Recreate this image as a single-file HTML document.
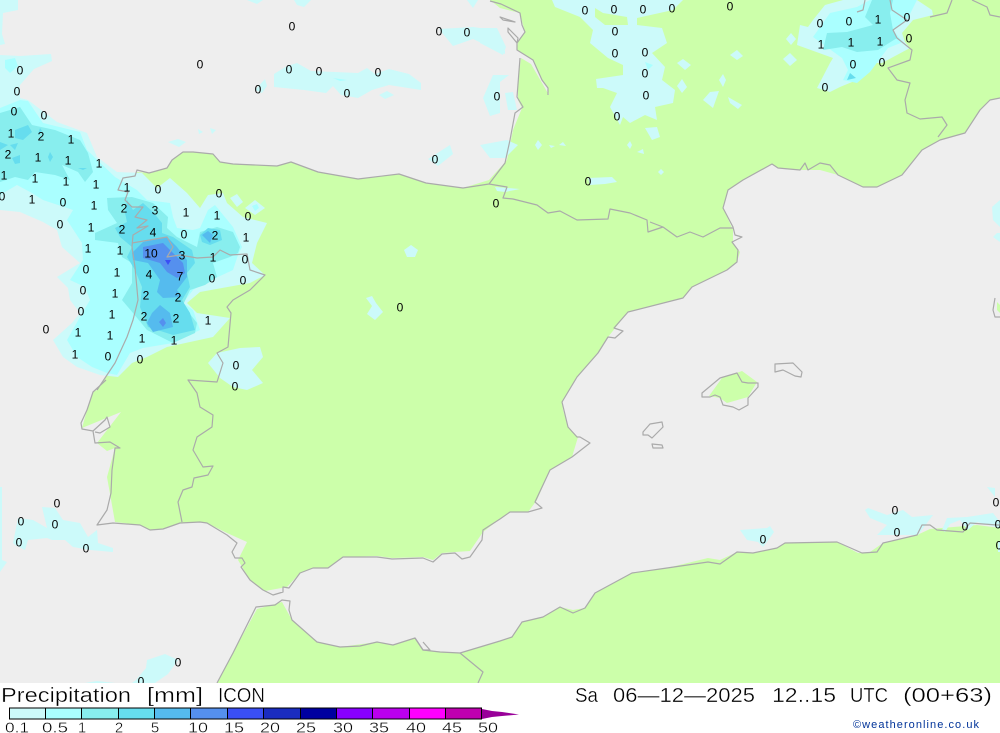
<!DOCTYPE html>
<html><head><meta charset="utf-8"><title>Precipitation</title>
<style>
html,body{margin:0;padding:0;background:#fff;width:1000px;height:733px;overflow:hidden}
svg{position:absolute;left:0;top:0;display:block}
.l text{font:12px "Liberation Sans",sans-serif;fill:#000;text-anchor:middle;dominant-baseline:central}
.c{fill:none;stroke:#aaa;stroke-width:1.2;stroke-linejoin:round}
.a{fill:#ccfafa}.b{fill:#aaffff}.d{fill:#88eeee}.e{fill:#66ddee}.f{fill:#55bbee}.g{fill:#5590ee}.h{fill:#3a4ff5}
.t text{font-family:"Liberation Sans",sans-serif;fill:#000;stroke:#fff;stroke-width:.35;paint-order:fill}
</style></head><body>
<svg width="1000" height="733" viewBox="0 0 1000 733" xmlns="http://www.w3.org/2000/svg">
<rect width="1000" height="683" fill="#eeeeee"/>
<!-- land -->
<g fill="#ccffaa">
<path d="M490,0 500,8 520,13 523,25 525,32 518,42 517,50 533,60 541,78 548,88 549,95 531,64 521,58 518,80 518,100 522,108 513,130 507,160 489,180 463,188 426,183 399,174 358,179 318,172 291,162 277,166 233,164 220,162 213,154 193,152 183,152 172,160 167,168 149,173 137,172 135,176 123,179 118,193 128,195 125,203 133,235 132,247 135,267 138,300 133,320 127,337 115,363 97,390 93,392 87,410 82,428 121,412 97,443 107,451 115,448 107,477 115,522 140,525 150,530 163,529 180,523 200,522 207,523 227,533 247,542 238,560 250,580 265,591 287,587 300,573 313,568 328,568 343,557 377,556 392,558 423,557 433,560 442,553 455,552 470,551 483,532 500,519 510,512 528,512 537,500 550,470 572,457 578,437 568,427 563,410 562,402 577,377 598,353 608,337 628,312 683,298 692,287 727,270 737,262 740,252 733,243 733,230 723,208 728,190 743,180 772,164 778,168 800,170 820,170 838,175 863,187 877,187 902,175 922,150 940,140 965,133 980,110 990,100 1000,98 1000,0Z"/>
<path d="M217,683 233,653 257,609 282,602 292,620 317,642 340,647 377,642 393,645 415,638 423,650 460,653 500,641 512,637 522,622 543,617 560,607 573,610 585,608 595,593 632,573 667,568 708,558 720,560 737,552 753,553 777,548 785,543 837,542 858,553 870,552 883,543 917,535 930,529 977,525 1000,528 1000,683Z"/>
<path d="M709,396 722,378 742,371 757,382 748,397 727,403 720,398Z"/>
<path d="M997,302 1000,305 1000,313 997,310Z"/>
</g>
<!-- 0.1 -->
<g class="a">
<path d="M0,55 20,56 51,54 52,61 34,69 20,85 20,98 28,100 57,122 87,133 97,157 117,172 142,173 157,188 170,178 187,193 200,208 208,195 223,193 227,203 243,217 267,223 257,243 252,263 265,275 250,283 222,288 200,292 187,303 197,313 230,318 213,337 167,347 147,357 132,363 118,377 100,375 77,367 63,357 53,340 72,323 80,313 70,300 68,288 57,277 80,263 62,247 57,230 43,222 20,212 0,210Z"/>
<path d="M0,0 18,0 18,10 3,13 2,34 5,44 0,45Z"/>
<path d="M230,198 237,194 243,202 237,207Z"/>
<path d="M245,208 255,200 265,208 255,215Z"/>
<path d="M825,5 843,0 917,0 932,10 933,15 913,20 902,33 905,42 910,48 882,63 872,63 857,80 840,87 830,92 817,88 830,63 833,58 797,45 800,25 808,27 813,20Z"/>
<path d="M552,0 683,0 673,10 637,18 637,25 662,28 667,43 652,53 665,67 662,80 675,90 673,103 655,107 657,120 645,115 630,123 623,117 620,125 610,107 617,93 603,88 597,88 596,79 623,75 623,65 608,58 590,43 593,30 580,17 555,7Z"/>
<path d="M677,63 683,59 691,65 685,70Z M677,86 682,79 687,87 682,93Z M730,55 737,50 743,56 737,60Z M719,80 723,74 726,80 723,87Z M703,100 710,92 719,91 713,108Z M728,97 742,105 738,109 730,103Z M645,128 657,127 660,137 652,140Z M783,59 790,53 797,60 790,66Z M786,39 791,33 796,39 791,45Z M535,145 538,140 542,145 538,150Z M549,145 555,146 551,148Z M559,145 563,142 566,146Z M627,145 630,141 632,145 630,149Z M637,152 643,149 644,154Z M658,172 661,169 664,172 661,175Z"/>
<path d="M588,178 612,177 617,182 605,184 590,185Z M495,187 520,189 505,192 497,191Z"/>
<path d="M480,28 497,28 506,47 503,55 480,43Z M439,29 473,27 487,29 505,51 505,54 473,39 453,46 443,34Z"/>
<path d="M483,98 493,75 509,75 500,82 500,113 490,116Z M505,93 513,92 517,110 508,110Z"/>
<path d="M480,145 507,140 518,145 505,158 490,158Z M428,159 450,145 453,154 438,166Z"/>
<path d="M274,74 287,66 297,63 311,71 358,73 367,68 375,74 389,69 409,74 421,83 421,90 389,85 372,90 358,98 341,95 333,86 326,93 304,90 274,87Z"/>
<path d="M255,90 265,79 267,86 262,93Z M379,95 387,91 394,95 385,99Z M294,0 311,0 304,7 297,5Z M467,0 478,0 473,8Z M247,0 263,0 257,4Z M168,142 178,139 186,142 179,147Z M198,129 203,132 199,134Z M210,128 216,130 212,134Z"/>
<path d="M208,363 217,353 240,348 260,347 263,357 252,370 263,383 247,390 233,387 220,378Z"/>
<path d="M404,250 411,245 418,250 415,257 407,257Z M366,298 372,296 376,303 383,312 375,320 367,314 372,306Z"/>
<path d="M13,543 18,518 33,520 47,528 42,507 55,508 63,520 80,523 88,537 97,530 98,543 113,548 113,552 90,550 73,547 65,540 52,540 47,538 28,540 25,550 15,545Z"/>
<path d="M0,487 2,487 2,560 7,562 0,572Z"/>
<path d="M136,680 146,668 147,660 165,654 178,660 168,674 155,683 132,683Z M85,683 97,681 115,683Z"/>
<path d="M740,530 767,528 770,526 774,532 767,542 763,547 758,542 747,540Z"/>
<path d="M865,510 868,508 887,515 903,510 912,517 933,515 918,535 905,535 877,535 887,525 870,518Z"/>
<path d="M942,530 947,518 967,517 993,513 1000,522 1000,528 977,522 968,530 960,520 950,524 945,532Z"/>
<path d="M987,487 995,488 995,497Z M993,237 997,233 1000,233 1000,242Z M998,542 1000,542 1000,552 998,552Z M992,207 1000,200 1000,227 993,220Z"/>
</g>
<path fill="#ccffaa" d="M595,8 595,17 605,25 628,25 627,17 603,13Z"/>
<!-- 0.5 -->
<g class="b">
<path d="M0,108 20,100 28,101 43,123 80,132 87,150 115,177 125,183 137,190 147,200 170,203 173,217 177,228 193,230 200,228 208,210 215,205 233,227 242,247 238,255 233,270 207,282 193,290 183,303 193,310 200,330 173,343 143,348 130,353 117,375 107,373 92,367 77,357 67,340 80,317 90,300 85,287 70,280 83,260 82,243 67,220 73,210 43,200 32,193 17,185 0,195Z"/>
<path d="M5,60 15,58 18,66 10,73 5,68Z"/>
<path d="M870,0 917,0 907,20 893,30 903,42 888,48 870,72 857,83 843,80 848,70 842,58 813,37 830,13 857,7Z"/>
<path d="M645,62 653,65 648,70Z M252,206 257,204 259,208 255,211Z M333,78 347,80 340,81Z"/>
</g>
<!-- 1 -->
<g class="d">
<path d="M0,113 20,107 32,125 55,130 80,140 88,153 93,172 85,182 78,172 62,165 70,180 55,175 35,172 28,180 15,177 0,182Z"/>
<path d="M107,198 132,197 153,203 168,217 167,228 177,237 197,247 200,232 217,227 233,232 240,247 238,253 230,257 213,263 217,277 205,285 190,290 183,305 197,323 195,333 173,343 147,330 133,313 122,300 132,283 132,263 122,257 118,243 95,240 95,233 117,223 108,210Z"/>
<path d="M872,0 893,0 890,13 893,30 897,38 878,50 857,52 842,47 823,50 827,33 847,32 873,25 865,17Z"/>
</g>
<!-- 2 -->
<g class="e">
<path d="M15,130 28,125 32,132 23,140 15,138Z M0,142 8,145 0,150Z M10,145 18,143 15,150Z M12,158 20,155 20,163 15,164Z M48,157 50,152 53,157 50,162Z M78,168 87,168 83,170Z M40,128 42,131 38,134Z"/>
<path d="M127,200 133,210 143,203 153,212 162,223 162,233 173,237 192,250 195,263 187,273 190,287 182,300 190,313 195,330 173,335 148,327 140,307 142,287 135,270 127,257 132,247 120,237 115,228 127,222 125,213Z"/>
<path d="M200,235 208,228 220,230 222,240 210,245 202,242Z"/>
<path d="M850,73 856,78 847,80Z"/>
</g>
<!-- 5 -->
<g class="f">
<path d="M132,253 143,242 167,237 177,247 187,260 187,277 177,290 182,297 163,298 157,292 160,280 148,263 133,260Z"/>
<path d="M152,313 160,305 170,313 173,327 153,332 147,323Z"/>
<path d="M202,235 208,231 213,235 210,243Z"/>
</g>
<!-- 10 -->
<g class="g">
<path d="M143,247 163,243 173,253 183,263 185,273 177,278 167,272 160,263 143,258Z"/>
<path d="M159,322 163,318 166,323 163,327Z"/>
</g>
<path class="h" d="M165,260 171,260 168,265Z"/>
<!-- coast -->
<g class="c">
<path d="M490,1 501,4 520,13 522,25 525,32 517,43 517,50 533,60 542,80 548,88 548,95M520,58 517,97 523,107 515,113 510,140 505,163 489,184 463,188 426,183 399,174 358,179 318,172 291,162 277,166 233,164 220,162 213,154 193,152 183,152 172,160 167,168 149,173 137,170 135,176 123,178 118,190 128,192 125,200 132,207 143,207 135,217 147,220 137,228 148,226 133,235 132,247 135,267 138,300 133,320 127,337 115,363 97,390"/>
<path d="M106,380 93,392 87,410 81,423 82,429 93,431 95,443 110,442 120,448 115,448 112,470 111,493 107,510 97,525 113,523 140,525 150,530 163,529 180,523 200,522 207,523 227,535 237,543 232,552 235,558 242,558 245,563 241,567 250,580 263,590 273,595 283,592 283,587 289,588 300,573 313,568 328,568 343,557 377,557 392,559 423,558 433,562 442,554 455,553 462,559 470,557 482,540 483,530 500,519 510,512 528,512 542,508 535,502 550,470 572,457 590,443 580,437 577,437 568,427 562,402 577,377 598,353 608,337 615,338 623,331 614,328 628,312 683,298 692,287 727,270 737,262 738,250 732,242 742,237 735,235 733,227 723,208 728,190 743,180 772,164 778,168 800,170 805,163 808,170 820,163 830,165 838,175 863,187 877,187 902,175 922,150 940,140 965,133 980,110 990,100 1000,98"/>
<path d="M489,184 507,187 503,198 513,199 537,205 548,213 560,211 577,220 608,219 610,209 630,213 647,220 648,232 663,227 650,222M663,227 677,237 690,232 703,237 720,228 733,228"/>
<path d="M132,243 167,237 173,247 167,257 180,255 197,258 213,257 220,250 230,255 247,254 250,270 265,275 250,290 233,300 227,307 231,313 228,347 217,353 223,363 217,382 188,380 197,393 200,407 213,415 212,427 197,437 193,450 203,467 213,466 208,475 194,478 192,487 183,490 178,502 182,522"/>
<path d="M217,683 233,653 256,607 275,605 282,600 290,601 289,610 292,620 317,642 340,647 360,646 377,642 393,645 415,638 423,650 440,652 460,653 500,641 512,637 522,622 543,617 560,607 573,613 585,608 595,593 632,573 667,568 708,562 720,564 737,552 753,553 777,548 785,543 837,542 862,553 877,552 883,543 917,535 922,525 930,525 937,530 963,532 970,523 997,525 1000,525"/>
<path d="M460,653 483,672 478,683"/>
<path d="M415,638 423,650 430,650 423,642"/>
<path d="M702,393 720,378 737,373 742,382 748,383 758,383 758,387 748,398 748,405 739,410 733,407 723,405 720,397 715,395 710,397 702,397Z"/>
<path d="M775,364 793,363 802,372 801,377 795,376 783,370 775,372Z"/>
<path d="M643,432 650,424 662,422 663,427 652,438 648,435 643,435Z"/>
<path d="M652,444 662,445 663,448 653,448Z"/>
<path d="M995,298 993,310 995,317 1000,317"/>
<path d="M890,0 892,10 907,20 893,30 897,38 912,50 910,60 888,68 897,80 910,83 905,100 907,113 920,119 942,117 947,125 938,137"/>
<path d="M972,0 987,7 990,15 1000,17M952,0 947,13 930,17M857,12 863,10 865,0"/>
<path d="M500,17 515,22 503,20ZM508,28 518,38 517,43 508,32Z"/>
<path d="M93,431 105,420 107,417 110,427 100,433 95,432"/>
</g>
<!-- labels -->
<g class="l" transform="translate(0,0.5)">
<text x="292" y="26">0</text><text x="439" y="31">0</text><text x="467" y="32">0</text><text x="585" y="10">0</text><text x="614" y="9">0</text><text x="643" y="9">0</text><text x="672" y="8">0</text><text x="730" y="6">0</text><text x="615" y="31">0</text><text x="615" y="53">0</text><text x="645" y="52">0</text><text x="645" y="73">0</text><text x="646" y="95">0</text><text x="617" y="116">0</text><text x="497" y="96">0</text><text x="435" y="159">0</text><text x="588" y="181">0</text><text x="496" y="203">0</text><text x="200" y="64">0</text><text x="289" y="69">0</text><text x="319" y="71">0</text><text x="378" y="72">0</text><text x="258" y="89">0</text><text x="347" y="93">0</text><text x="20" y="70">0</text><text x="17" y="91">0</text>
<text x="820" y="23">0</text><text x="849" y="21">0</text><text x="878" y="19">1</text><text x="907" y="17">0</text><text x="909" y="38">0</text><text x="821" y="44">1</text><text x="851" y="42">1</text><text x="880" y="41">1</text><text x="853" y="64">0</text><text x="882" y="62">0</text><text x="825" y="87">0</text>
<text x="14" y="111">0</text><text x="44" y="115">0</text><text x="11" y="133">1</text><text x="41" y="136">2</text><text x="71" y="139">1</text><text x="8" y="154">2</text><text x="38" y="157">1</text><text x="68" y="160">1</text><text x="99" y="163">1</text><text x="4" y="175">1</text><text x="35" y="178">1</text><text x="66" y="181">1</text><text x="96" y="184">1</text><text x="127" y="187">1</text><text x="158" y="189">0</text><text x="219" y="193">0</text><text x="2" y="196">0</text><text x="32" y="199">1</text><text x="63" y="202">0</text><text x="94" y="205">1</text><text x="124" y="208">2</text><text x="155" y="210">3</text><text x="186" y="212">1</text><text x="217" y="215">1</text><text x="248" y="216">0</text><text x="60" y="224">0</text><text x="91" y="227">1</text><text x="122" y="229">2</text><text x="153" y="232">4</text><text x="184" y="234">0</text><text x="215" y="235">2</text><text x="246" y="237">1</text><text x="88" y="248">1</text><text x="120" y="250">1</text><text x="151" y="253">10</text><text x="182" y="255">3</text><text x="213" y="257">1</text><text x="245" y="259">0</text><text x="86" y="269">0</text><text x="117" y="272">1</text><text x="149" y="274">4</text><text x="180" y="276">7</text><text x="212" y="278">0</text><text x="243" y="280">0</text><text x="83" y="290">0</text><text x="115" y="293">1</text><text x="146" y="295">2</text><text x="178" y="297">2</text><text x="81" y="311">0</text><text x="112" y="314">1</text><text x="144" y="316">2</text><text x="176" y="318">2</text><text x="208" y="320">1</text><text x="46" y="329">0</text><text x="78" y="332">1</text><text x="110" y="335">1</text><text x="142" y="338">1</text><text x="174" y="340">1</text><text x="75" y="354">1</text><text x="108" y="356">0</text><text x="140" y="359">0</text><text x="236" y="365">0</text><text x="235" y="386">0</text>
<text x="400" y="307">0</text><text x="57" y="503">0</text><text x="21" y="521">0</text><text x="55" y="524">0</text><text x="86" y="548">0</text><text x="19" y="542">0</text><text x="178" y="662">0</text><text x="141" y="681">0</text><text x="763" y="539">0</text><text x="895" y="510">0</text><text x="897" y="532">0</text><text x="965" y="526">0</text><text x="996" y="502">0</text><text x="998" y="524">0</text><text x="999" y="545">0</text>
</g>
<!-- footer -->
<rect y="683" width="1000" height="50" fill="#fff"/>
<g class="t" font-size="20">
<text x="1" y="702" textLength="130" lengthAdjust="spacingAndGlyphs">Precipitation</text>
<text x="147" y="702" textLength="56" lengthAdjust="spacingAndGlyphs">[mm]</text>
<text x="218" y="702" textLength="47" lengthAdjust="spacingAndGlyphs">ICON</text>
<text x="575" y="702" textLength="23" lengthAdjust="spacingAndGlyphs">Sa</text>
<text x="613" y="702" textLength="142" lengthAdjust="spacingAndGlyphs">06—12—2025</text>
<text x="772" y="702" textLength="64" lengthAdjust="spacingAndGlyphs">12..15</text>
<text x="850" y="702" textLength="38" lengthAdjust="spacingAndGlyphs">UTC</text>
<text x="903" y="702" textLength="89" lengthAdjust="spacingAndGlyphs">(00+63)</text>
</g>
<g stroke="#000" stroke-width="1">
<rect x="9.5" y="708" width="36" height="11" fill="#ccfafa"/>
<rect x="45.5" y="708" width="36" height="11" fill="#aaffff"/>
<rect x="81.5" y="708" width="37" height="11" fill="#88eeee"/>
<rect x="118.5" y="708" width="36" height="11" fill="#66ddee"/>
<rect x="154.5" y="708" width="36" height="11" fill="#55bbee"/>
<rect x="190.5" y="708" width="37" height="11" fill="#5590ee"/>
<rect x="227.5" y="708" width="36" height="11" fill="#3a4ff5"/>
<rect x="263.5" y="708" width="37" height="11" fill="#1a2cc0"/>
<rect x="300.5" y="708" width="36" height="11" fill="#0000a0"/>
<rect x="336.5" y="708" width="36" height="11" fill="#8800ff"/>
<rect x="372.5" y="708" width="37" height="11" fill="#bb00ee"/>
<rect x="409.5" y="708" width="36" height="11" fill="#ff00ff"/>
<rect x="445.5" y="708" width="36" height="11" fill="#c000b0"/>
</g>
<path d="M482,709 492,711 502,712 519,714.5 502,716 492,717 482,719Z" fill="#990099"/>
<g class="t" font-size="15" text-anchor="middle">
<text x="17" y="732.5" textLength="24" lengthAdjust="spacingAndGlyphs">0.1</text><text x="55" y="732.5" textLength="26" lengthAdjust="spacingAndGlyphs">0.5</text><text x="82" y="732.5">1</text><text x="119" y="732.5">2</text><text x="155" y="732.5">5</text><text x="198" y="732.5" textLength="20" lengthAdjust="spacingAndGlyphs">10</text><text x="234" y="732.5" textLength="20" lengthAdjust="spacingAndGlyphs">15</text><text x="270" y="732.5" textLength="20" lengthAdjust="spacingAndGlyphs">20</text><text x="306" y="732.5" textLength="20" lengthAdjust="spacingAndGlyphs">25</text><text x="343" y="732.5" textLength="20" lengthAdjust="spacingAndGlyphs">30</text><text x="379" y="732.5" textLength="20" lengthAdjust="spacingAndGlyphs">35</text><text x="416" y="732.5" textLength="20" lengthAdjust="spacingAndGlyphs">40</text><text x="452" y="732.5" textLength="20" lengthAdjust="spacingAndGlyphs">45</text><text x="488" y="732.5" textLength="20" lengthAdjust="spacingAndGlyphs">50</text>
</g>
<text x="853" y="728" font-family="'Liberation Sans',sans-serif" font-size="11" fill="#003399" textLength="126" lengthAdjust="spacing">©weatheronline.co.uk</text>
</svg>
</body></html>
